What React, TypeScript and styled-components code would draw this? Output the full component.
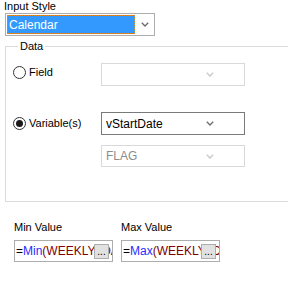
import React from 'react';
import styled, { createGlobalStyle } from 'styled-components';

const GlobalStyle = createGlobalStyle`
  html, body {
    margin: 0;
    padding: 0;
    background: #ffffff;
  }
`;

const Chevron = (props: { disabled?: boolean }) => (
  <svg width="8" height="5" viewBox="0 0 8 5">
    <path
      d="M0.8 0.8 L4 4 L7.2 0.8"
      fill="none"
      stroke={props.disabled ? '#c8c8c8' : '#6a6a6a'}
      strokeWidth="1.3"
    />
  </svg>
);

const Combo = (props: { value?: string; disabled?: boolean; dark?: boolean; row: number }) => {
  return (
    <ComboBox $disabled={props.disabled} $dark={props.dark} $row={props.row}>
      <ComboText $disabled={props.disabled}>{props.value}</ComboText>
      <ArrowSlot>
        <Chevron disabled={props.disabled} />
      </ArrowSlot>
    </ComboBox>
  );
};

const Radio = (props: { label: string; checked?: boolean; top?: boolean; row: number }) => {
  return (
    <RadioLabel $top={props.top} $row={props.row}>
      <RadioCircle>{props.checked && <RadioDot />}</RadioCircle>
      {props.label}
    </RadioLabel>
  );
};

const ExprBox = (props: { fn: string }) => {
  return (
    <TextBox>
      <ExprText>
        <span>=</span>
        <FnName>{props.fn}</FnName>
        <Arg>(WEEKLY_DATE)</Arg>
      </ExprText>
      <DotsButton>...</DotsButton>
    </TextBox>
  );
};

export default function App() {
  return (
    <Page>
      <GlobalStyle />
      <Caption>Input Style</Caption>
      <StyleCombo>
        <Selected>Calendar</Selected>
        <ArrowSlot>
          <Chevron />
        </ArrowSlot>
      </StyleCombo>
      <Group>
        <Legend>Data</Legend>
        <GroupGrid>
          <Radio label="Field" top row={1} />
          <Combo disabled row={1} />
          <Radio label="Variable(s)" checked row={3} />
          <Combo value="vStartDate" dark row={3} />
          <Combo value="FLAG" disabled row={5} />
        </GroupGrid>
      </Group>
      <ValuesGrid>
        <ValueLabel>Min Value</ValueLabel>
        <ValueLabel>Max Value</ValueLabel>
        <ExprBox fn="Min" />
        <ExprBox fn="Max" />
      </ValuesGrid>
    </Page>
  );
}

const Page = styled.div`
  width: 288px;
  height: 282px;
  overflow: hidden;
  background: #ffffff;
  font-family: 'Liberation Sans', Arial, sans-serif;
  font-size: 11px;
  color: #000000;
  display: flex;
  flex-direction: column;
`;

const Caption = styled.div`
  line-height: 12px;
  padding-left: 4px;
  white-space: nowrap;
`;

const ValueLabel = styled.div`
  line-height: 12px;
  white-space: nowrap;
`;

const StyleCombo = styled.div`
  box-sizing: border-box;
  margin: 1px 0 0 5px;
  width: 150px;
  height: 23px;
  border: 1px solid #adadad;
  padding: 1px;
  display: flex;
  align-items: stretch;
`;

const Selected = styled.div`
  box-sizing: border-box;
  width: 128px;
  background: #3399ff;
  color: #ffffff;
  border: 1px dotted #e0892a;
  padding-left: 1px;
  display: flex;
  align-items: center;
  font-size: 12px;
`;

const ArrowSlot = styled.div`
  flex: 1;
  display: flex;
  align-items: center;
  justify-content: center;
  padding-left: 2px;
`;

const ComboBox = styled.div<{ $disabled?: boolean; $dark?: boolean; $row: number }>`
  grid-column: 2;
  grid-row: ${(p) => p.$row};
  box-sizing: border-box;
  width: 144px;
  height: 100%;
  border: 1px solid ${(p) => (p.$disabled ? '#d9d9d9' : p.$dark ? '#7a7a7a' : '#adadad')};
  display: flex;
  align-items: center;
  padding-left: 4px;
`;

const ComboText = styled.div<{ $disabled?: boolean }>`
  flex: 1;
  color: ${(p) => (p.$disabled ? '#8c8c8c' : '#000000')};
  font-size: 12px;
`;

const Group = styled.fieldset`
  box-sizing: border-box;
  margin: 4px 0 0 5px;
  width: 300px;
  min-width: 0;
  border: 1px solid #dcdcdc;
  padding: 10px 0 34px 7px;
`;

const Legend = styled.legend`
  margin-left: 5px;
  padding: 0 2px;
  line-height: 13px;
`;

const GroupGrid = styled.div`
  display: grid;
  grid-template-columns: 88px 144px;
  grid-template-rows: 23px 26px 23px 10px 22px;
  align-items: center;
`;

const RadioLabel = styled.label<{ $top?: boolean; $row: number }>`
  grid-column: 1;
  grid-row: ${(p) => p.$row};
  display: flex;
  align-items: center;
  gap: 3px;
  line-height: 13px;
  align-self: ${(p) => (p.$top ? 'start' : 'center')};
  margin-top: ${(p) => (p.$top ? '3px' : '0')};
  white-space: nowrap;
`;

const RadioCircle = styled.span`
  box-sizing: border-box;
  width: 13px;
  height: 13px;
  border-radius: 50%;
  border: 1px solid #333333;
  background: #ffffff;
  display: flex;
  align-items: center;
  justify-content: center;
`;

const RadioDot = styled.span`
  width: 7px;
  height: 7px;
  border-radius: 50%;
  background: #1a1a1a;
`;

const ValuesGrid = styled.div`
  display: grid;
  grid-template-columns: 99px 99px;
  column-gap: 8px;
  row-gap: 7px;
  margin: 19px 0 0 14px;
`;

const TextBox = styled.div`
  position: relative;
  box-sizing: border-box;
  height: 22px;
  border: 1px solid #adadad;
  overflow: hidden;
  display: flex;
  align-items: center;
  padding-left: 1px;
`;

const ExprText = styled.div`
  white-space: nowrap;
  font-size: 12px;
`;

const FnName = styled.span`
  color: #2b2bff;
`;

const Arg = styled.span`
  color: #800000;
`;

const DotsButton = styled.div`
  position: absolute;
  right: 3px;
  top: 3px;
  box-sizing: border-box;
  width: 15px;
  height: 15px;
  background: #e1e1e1;
  border: 1px solid #adadad;
  font-size: 10px;
  line-height: 14px;
  text-align: center;
  color: #000000;
`;
